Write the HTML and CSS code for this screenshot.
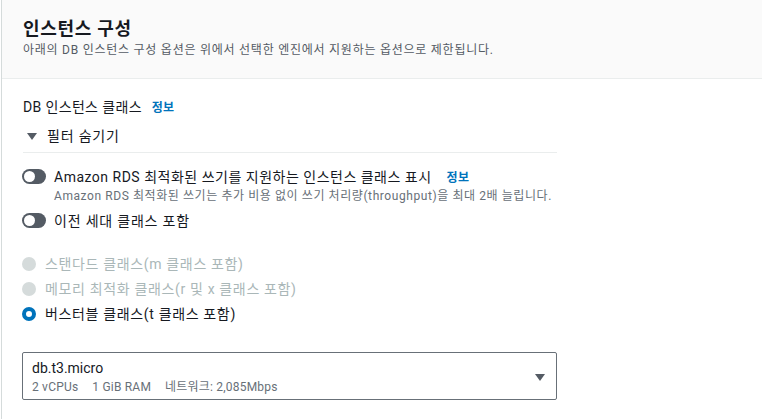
FILE: index.html
```html
<!DOCTYPE html>
<html lang="ko">
<head>
<meta charset="utf-8">
<link rel="stylesheet" href="styles.css">
</head>
<body>
<div class="panel">
  <div class="header">
    <h2 class="title">인스턴스 구성</h2>
    <p class="subtitle">아래의 DB 인스턴스 구성 옵션은 위에서 선택한 엔진에서 지원하는 옵션으로 제한됩니다.</p>
  </div>
  <div class="content">
    <div class="field-label">DB 인스턴스 클래스 <a class="info">정보</a></div>
    <div class="filter-toggle"><span class="caret-down"></span>필터 숨기기</div>
    <div class="divider"></div>
    <div class="toggle-row first">
      <span class="toggle"><span class="knob"></span></span>
      <div class="toggle-text">
        <div class="toggle-label">Amazon RDS 최적화된 쓰기를 지원하는 인스턴스 클래스 표시 <a class="info">정보</a></div>
        <div class="toggle-desc">Amazon RDS 최적화된 쓰기는 추가 비용 없이 쓰기 처리량(throughput)을 최대 2배 늘립니다.</div>
      </div>
    </div>
    <div class="toggle-row second">
      <span class="toggle"><span class="knob"></span></span>
      <div class="toggle-text">
        <div class="toggle-label short">이전 세대 클래스 포함</div>
      </div>
    </div>
    <div class="radios">
      <div class="radio disabled"><span class="dot"></span>스탠다드 클래스(m 클래스 포함)</div>
      <div class="radio disabled"><span class="dot"></span>메모리 최적화 클래스(r 및 x 클래스 포함)</div>
      <div class="radio checked"><span class="dot"></span>버스터블 클래스(t 클래스 포함)</div>
    </div>
    <div class="select">
      <div class="select-body">
        <div class="select-value">db.t3.micro</div>
        <div class="select-meta"><span>2 vCPUs</span><span>1 GiB RAM</span><span>네트워크: 2,085Mbps</span></div>
      </div>
      <svg class="select-caret" width="10" height="8" viewBox="0 0 10 8"><polygon points="0,0 10,0 5,7" fill="#545b64"/></svg>
    </div>
  </div>
</div>
</body>
</html>
```

FILE: styles.css
```css
* { box-sizing: border-box; }
html, body { margin: 0; padding: 0; background: #fff; }
body {
  font-family: Roboto, "Noto Sans CJK KR", "Liberation Sans", sans-serif;
  color: #16191f;
  font-size: 14px;
}
.panel {
  margin-left: 1px;
  border-left: 1px solid #d5dbdb;
  min-height: 419px;
}
.header {
  background: #fafafa;
  border-bottom: 1px solid #eaeded;
  padding: 18px 21px 0;
  height: 79px;
}
.title {
  margin: 0;
  font-size: 18px;
  line-height: 22px;
  font-weight: 700;
  color: #16191f;
  letter-spacing: 0.7px;
}
.subtitle {
  margin: 2px 0 0;
  font-size: 12px;
  line-height: 16px;
  color: #545b64;
  letter-spacing: 0.75px;
}
.content {
  padding: 18px 21px 0;
  display: flex;
  flex-direction: column;
  align-items: flex-start;
}
.field-label {
  line-height: 20px;
  font-size: 14px;
  letter-spacing: 0.35px;
}
.info {
  color: #0073bb;
  font-size: 12px;
  font-weight: 700;
  margin-left: 6px;
  letter-spacing: 0.3px;
}
.toggle-label .info { margin-left: 11px; }
.filter-toggle {
  margin-top: 8px;
  line-height: 20px;
  display: flex;
  align-items: center;
  gap: 10px;
  padding-left: 4px;
  letter-spacing: 0.8px;
}
.caret-down {
  width: 0; height: 0;
  border-left: 5px solid transparent;
  border-right: 5px solid transparent;
  border-top: 7px solid #545b64;
}
.divider {
  margin-top: 6px;
  width: 534px;
  height: 1px;
  background: #eaeded;
}
.toggle-row {
  display: flex;
  align-items: flex-start;
  gap: 8px;
}
.toggle-row.first { margin-top: 14px; }
.toggle-row.second { margin-top: 7px; }
.toggle {
  margin-left: -1px;
  margin-top: 2px;
  width: 24px;
  height: 15px;
  border-radius: 8px;
  background: #545b64;
  position: relative;
  flex: none;
}
.knob {
  position: absolute;
  left: 2px; top: 2px;
  width: 11px; height: 11px;
  border-radius: 50%;
  background: #fff;
}
.toggle-label { line-height: 20px; letter-spacing: 0.5px; white-space: nowrap; }
.toggle-label.short { letter-spacing: 0.8px; }
.toggle-desc {
  font-size: 12px;
  line-height: 16px;
  color: #687078;
  letter-spacing: 0.58px;
  white-space: nowrap;
}
.radios {
  margin-top: 23px;
  display: flex;
  flex-direction: column;
  gap: 5px;
}
.radio {
  display: flex;
  align-items: center;
  gap: 9px;
  line-height: 20px;
  margin-left: -1px;
  letter-spacing: 0.65px;
}
.dot {
  width: 14px; height: 14px;
  border-radius: 50%;
  flex: none;
}
.radio.disabled { color: #aab7b8; }
.radio.disabled .dot { background: #d5dbdb; }
.radio.checked .dot {
  border: 4px solid #0073bb;
  background: #fff;
}
.select {
  margin-top: 28px;
  margin-left: -1px;
  width: 535px;
  height: 48px;
  border: 1px solid #687078;
  border-radius: 2px;
  display: flex;
  align-items: center;
  padding: 5px 11px 4px 9px;
}
.select-body { flex: 1; align-self: flex-start; }
.select-value { line-height: 20px; }
.select-meta {
  font-size: 12px;
  line-height: 16px;
  color: #687078;
  display: flex;
  gap: 14px;
  margin-top: 1px;
  letter-spacing: 0.2px;
}
.select-caret { flex: none; margin-top: 2px; }
```
